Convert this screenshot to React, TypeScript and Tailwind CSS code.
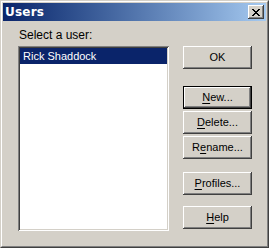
import React from "react";

const raised =
  "shadow-[inset_-1px_-1px_#404040,inset_1px_1px_#ffffff,inset_-2px_-2px_#808080,inset_2px_2px_#d4d0c8]";

function CloseGlyph() {
  // 8x7 pixel cross, drawn row by row
  const rows = [
    [0, 1, 6, 7],
    [1, 2, 5, 6],
    [2, 3, 4, 5],
    [3, 4],
    [2, 3, 4, 5],
    [1, 2, 5, 6],
    [0, 1, 6, 7],
  ];
  return (
    <svg width="8" height="7" viewBox="0 0 8 7" shapeRendering="crispEdges">
      {rows.map((cols, y) =>
        cols.map((x) => <rect key={`${x}-${y}`} x={x} y={y} width="1" height="1" fill="#000" />)
      )}
    </svg>
  );
}

function Btn({
  label,
  mnemonic,
  isDefault,
  className,
}: {
  label: string;
  mnemonic?: number;
  isDefault?: boolean;
  className?: string;
}) {
  const text =
    mnemonic === undefined ? (
      label
    ) : (
      <>
        {label.slice(0, mnemonic)}
        <span className="underline underline-offset-[2px]">{label[mnemonic]}</span>
        {label.slice(mnemonic + 1)}
      </>
    );
  return (
    <div
      className={`w-[69px] h-[23px] ${isDefault ? "border border-black" : ""} ${className ?? ""}`}
    >
      <div
        className={`w-full h-full bg-[#d4d0c8] ${raised} flex items-center justify-center text-[11px] text-black leading-none`}
      >
        {text}
      </div>
    </div>
  );
}

export default function App() {
  return (
    <div
      className="w-[269px] h-[248px] bg-[#d4d0c8] border border-t-[#d4d0c8] border-l-[#d4d0c8] border-r-[#404040] border-b-[#404040]"
      style={{ fontFamily: '"Liberation Sans", Arial, sans-serif' }}
    >
      <div className="h-full border border-t-white border-l-white border-r-[#808080] border-b-[#808080] p-[1px] flex flex-col">
        {/* title bar */}
        <div className="h-[18px] bg-linear-to-r from-[#0a246a] to-[#a6caf0] flex items-center justify-between pl-[2px] pr-[2px]">
          <span
            className="text-white font-bold text-[12px] tracking-[0.2px]"
            style={{ fontFamily: '"DejaVu Sans", Verdana, sans-serif' }}
          >
            Users
          </span>
          <div className={`w-[16px] h-[14px] bg-[#d4d0c8] ${raised} flex items-center justify-center`}>
            <CloseGlyph />
          </div>
        </div>

        {/* body */}
        <div className="flex flex-1 pl-[15px] pt-[8px]">
          <div className="flex flex-col">
            <div className="ml-[1px] h-[13px] text-[12px] leading-[13px] text-black">Select a user:</div>
            <div className="mt-[4px] w-[151px] h-[185px] bg-white shadow-[inset_1px_1px_#808080,inset_-1px_-1px_#ffffff,inset_2px_2px_#404040,inset_-2px_-2px_#d4d0c8] p-[2px]">
              <div className="h-[16px] bg-[#0a246a] text-white text-[11px] leading-[16px] pl-[3px]">
                Rick Shaddock
              </div>
            </div>
          </div>
          <div className="ml-[14px] mt-[17px] flex flex-col">
            <Btn label="OK" />
            <Btn label="New..." mnemonic={0} isDefault className="mt-[17px]" />
            <Btn label="Delete..." mnemonic={0} className="mt-[2px]" />
            <Btn label="Rename..." mnemonic={1} className="mt-[2px]" />
            <Btn label="Profiles..." mnemonic={0} className="mt-[13px]" />
            <Btn label="Help" mnemonic={0} className="mt-[11px]" />
          </div>
        </div>
      </div>
    </div>
  );
}
